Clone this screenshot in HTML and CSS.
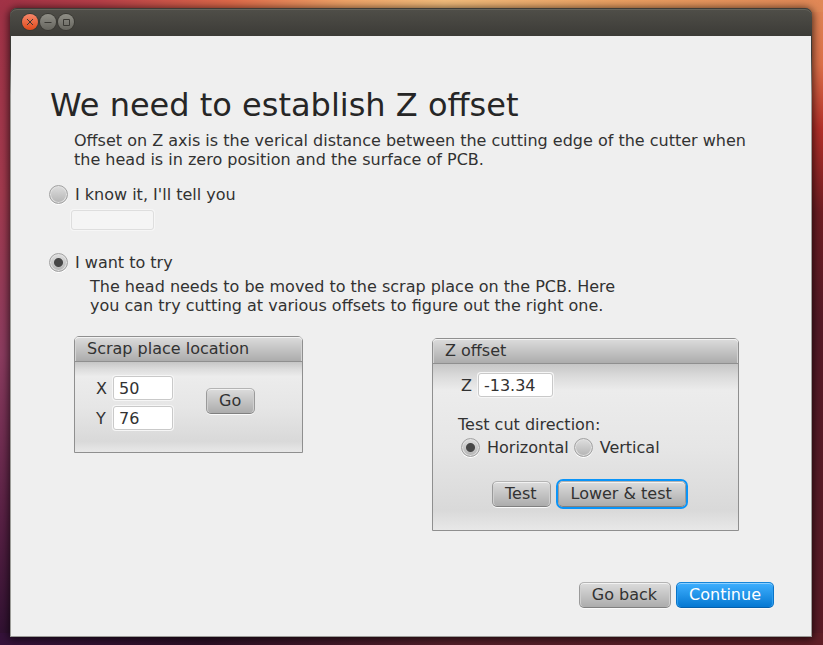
FILE: index.html
```html
<!DOCTYPE html>
<html lang="en">
<head>
<meta charset="utf-8">
<title>Z offset</title>
<link rel="stylesheet" href="styles.css">
</head>
<body>
<div class="window">
  <header class="titlebar">
    <button class="wm wm-close" type="button" aria-label="Close"><svg viewBox="0 0 16 16"><path d="M5 5l6 6M11 5l-6 6"/></svg></button>
    <button class="wm" type="button" aria-label="Minimize"><svg viewBox="0 0 16 16"><path d="M4.500 8.500h7"/></svg></button>
    <button class="wm" type="button" aria-label="Maximize"><svg viewBox="0 0 16 16"><path d="M5.500 5.500h6v6h-6z"/></svg></button>
  </header>
  <main class="content">
    <h1>We need to establish Z offset</h1>
    <p class="intro">Offset on Z axis is the verical distance between the cutting edge of the cutter when the head is in zero position and the surface of PCB.</p>

    <label class="choice"><input type="radio" name="mode">I know it, I'll tell you</label>
    <input class="field known" type="text" aria-label="Known offset" disabled>

    <label class="choice"><input type="radio" name="mode" checked>I want to try</label>
    <p class="hint">The head needs to be moved to the scrap place on the PCB. Here you can try cutting at various offsets to figure out the right one.</p>

    <div class="panels">
      <section class="panel scrap">
        <h2>Scrap place location</h2>
        <div class="panel-body">
          <div class="coords">
            <label for="x">X</label><input class="field" id="x" type="text" value="50">
            <label for="y">Y</label><input class="field" id="y" type="text" value="76">
          </div>
          <button class="btn" type="button">Go</button>
        </div>
      </section>
      <section class="panel offset">
        <h2>Z offset</h2>
        <div class="panel-body">
          <div class="z-row"><label for="z">Z</label><input class="field" id="z" type="text" value="-13.34"></div>
          <fieldset>
            <legend>Test cut direction:</legend>
            <div class="directions">
              <label class="choice"><input type="radio" name="dir" checked>Horizontal</label>
              <label class="choice"><input type="radio" name="dir">Vertical</label>
            </div>
          </fieldset>
          <div class="actions">
            <button class="btn" type="button">Test</button>
            <button class="btn focused" type="button">Lower &amp; test</button>
          </div>
        </div>
      </section>
    </div>

    <footer class="nav">
      <button class="btn" type="button">Go back</button>
      <button class="btn primary" type="button">Continue</button>
    </footer>
  </main>
</div>
</body>
</html>
```
FILE: styles.css
```css
* { box-sizing: border-box; }

body {
  display: flex;
  min-height: 100vh;
  margin: 0;
  padding: 8px 11px 8px 10px;
  background:
    linear-gradient(to right, #a03246, #b73f49 12%, #df6a4a 28%, #f0a468 42%, #f3bd7c 54%, #eba062 75%, #e08756) top / 100% 12px no-repeat,
    linear-gradient(to right, #35123a, #2d1026 25%, #54202a 55%, #5f1e26) bottom / 100% 12px no-repeat,
    linear-gradient(#a03246, #a23a4e 30%, #8c3c60 55%, #5a2145 80%, #2d1030) left / 50% 100% no-repeat,
    linear-gradient(#e08756, #dc7048 10%, #b22f28 20%, #6c1d22 33%, #541a26 50%, #5a1c26) right / 50% 100% no-repeat;
  color: #323232;
  font: 16px/19px "DejaVu Sans", sans-serif;
}

h1, h2, p, fieldset, legend { margin: 0; padding: 0; border: 0; font-weight: normal; }
button, input { font: inherit; color: inherit; margin: 0; }

.window {
  flex: 1;
  display: flex;
  flex-direction: column;
  border-radius: 7px 7px 0 0;
  box-shadow: 0 1px 8px 1px rgba(0, 0, 0, .7);
}

.titlebar {
  display: flex;
  align-items: center;
  gap: 2px;
  height: 28px;
  padding-left: 12px;
  border-radius: 7px 7px 0 0;
  background: linear-gradient(#504f49, #3c3b37);
  box-shadow: inset 0 1px #3c3b37, inset 0 2px #64635b;
}

.wm {
  width: 16px;
  height: 16px;
  padding: 0;
  border: 0;
  border-radius: 50%;
  background: linear-gradient(#908f87, #66655e);
  box-shadow: 0 0 0 1px #3a3934;
}

.wm-close { background: linear-gradient(#f7876a, #df4a1b); }

.wm svg { display: block; fill: none; stroke: #3a3934; }

.content {
  flex: 1;
  display: flex;
  flex-direction: column;
  align-items: flex-start;
  padding: 50px 37px 28px 38px;
  border: solid #9c9c98;
  border-width: 0 1px 1px;
  border-image: linear-gradient(#3c3b37, #3c3b37 20px, #9c9c98 60px) 1;
  background: #efefef;
}

h1 { padding-left: 1px; font-size: 32px; line-height: 38px; color: #262626; }
.intro { max-width: 705px; margin: 7px 0 16px; padding-left: 25px; }
.hint { max-width: 580px; margin-top: 5px; padding-left: 41px; }

.choice { display: flex; align-items: center; gap: 7px; }

input[type="radio"] {
  appearance: none;
  width: 19px;
  height: 19px;
  border: 1px solid #a2a2a2;
  border-radius: 50%;
  background: linear-gradient(#dedede, #b4b4b4);
  box-shadow: inset 0 0 0 1px #e2e2e2, 0 1px #fff;
}

input[type="radio"]:checked {
  background: radial-gradient(circle, #474747 4px, transparent 5px), linear-gradient(#dedede, #b4b4b4);
}

.field {
  height: 24px;
  padding: 0 5px;
  border: 1px solid #c9c9c9;
  border-radius: 3px;
  outline: 0;
  background: #fff;
  box-shadow: 0 0 0 1px #f6f6f6;
}

.known { width: 83px; height: 20px; margin: 6px 0 23px 22px; border-color: #dedede; background: #f5f5f5; }

.panels {
  display: flex;
  align-items: flex-start;
  justify-content: space-between;
  width: 100%;
  margin-top: 21px;
  padding: 0 35px 0 25px;
}

.panel { border: 1px solid #8f8f8f; border-radius: 5px 5px 0 0; }
.scrap { width: 229px; }
.offset { width: 307px; margin-top: 2px; }

.panel h2 {
  height: 25px;
  padding: 2px 12px;
  border-bottom: 1px solid #8f8f8f;
  border-radius: 4px 4px 0 0;
  background: linear-gradient(#dcdcdc, #acacac);
  box-shadow: inset 0 1px #f2f2f2, inset 1px 0 #d4d4d4, inset -1px 0 #d4d4d4;
  font-size: 16px;
  line-height: 19px;
}

.panel-body { background: linear-gradient(#c6c6c6, #dcdcdc 8%, #ececec 16%, #e6e6e6 50%, #d9d9d9 88%, #e8e8e8); }

.scrap .panel-body { display: flex; align-items: flex-start; gap: 33px; padding: 14px 20px 22px 21px; }
.coords { display: grid; grid-template-columns: 11px 60px; gap: 6px; align-items: center; }
.coords .field { width: 60px; }
.coords + .btn { margin-top: 12px; }

.offset .panel-body { padding: 9px 24px 23px 25px; }
.z-row { display: flex; align-items: center; gap: 6px; padding-left: 3px; margin-bottom: 18px; }
.z-row .field { width: 75px; }
.directions { display: flex; gap: 5px; padding: 4px 0 0 3px; }
.actions { display: flex; gap: 7px; margin-top: 24px; padding-left: 34px; }

.btn {
  height: 26px;
  padding: 0 13px 1px 12px;
  border: 1px solid;
  border-color: #b4b4b4 #9a9a9a #808080;
  border-radius: 5px;
  background: linear-gradient(#dcdcdc, #acacac);
  box-shadow: inset 0 1px #f2f2f2, inset 1px 0 #d0d0d0, inset -1px 0 #d0d0d0, 0 1px #fafafa;
  line-height: 19px;
  white-space: nowrap;
}

.focused { border-color: #b4b4b4 #9a9a9a #808080; box-shadow: inset 0 1px #f2f2f2, 0 0 0 2px #0a94f8; }

.primary {
  padding-right: 12px;
  border-color: #1585d8 #0a74c8 #0560ac;
  background: linear-gradient(#3fb0ff, #0578d2);
  box-shadow: inset 0 1px #8ccfff, inset 1px 0 #2f9ff0, inset -1px 0 #2f9ff0, 0 1px #fafafa;
  color: #fff;
}

.nav { display: flex; gap: 5px; margin-top: auto; align-self: flex-end; }
```
